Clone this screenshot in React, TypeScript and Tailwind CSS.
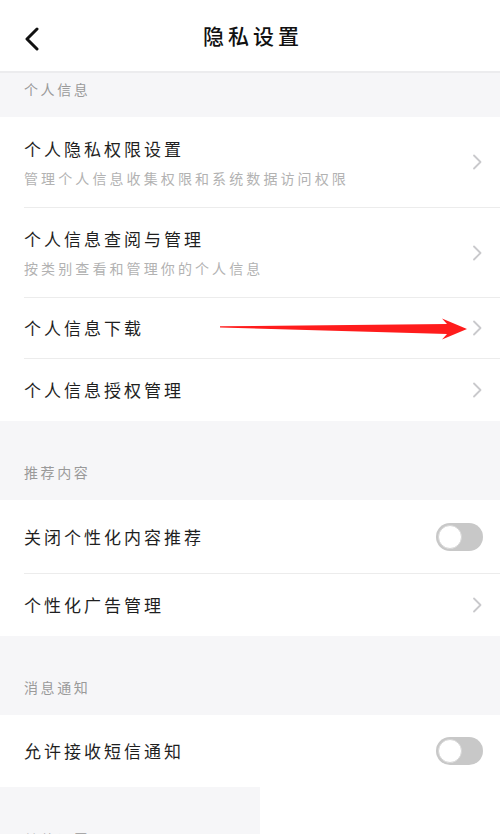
import React from "react";

const font = { fontFamily: '"Noto Sans CJK SC", "Noto Sans", sans-serif' };

function Chevron() {
  return (
    <svg width="12" height="18" viewBox="0 0 12 18" className="shrink-0">
      <path d="M3 2.5 L9.5 9 L3 15.5" fill="none" stroke="#c9c9cc" strokeWidth="1.8" strokeLinecap="round" strokeLinejoin="round" />
    </svg>
  );
}

function Toggle() {
  return (
    <div className="w-[47px] h-[28px] rounded-full bg-[#c8c8c8] p-[2px] flex items-center">
      <div className="w-[24px] h-[24px] rounded-full bg-white border border-[#d6d6d6]" />
    </div>
  );
}

function SectionLabel({ text, first }: { text: string; first?: boolean }) {
  return (
    <div className={`bg-[#f6f6f8] px-6 pb-[18px] ${first ? "pt-[6px]" : "pt-[41px]"}`}>
      <span className="block text-[14px] leading-[20px] tracking-[2.6px] text-[#9a9a9a]">{text}</span>
    </div>
  );
}

function Row({ title, sub, toggle, h, last }: { title: string; sub?: string; toggle?: boolean; h: string; last?: boolean }) {
  return (
    <div className={`flex items-center pl-6 ${h}`}>
      <div className={`flex-1 h-full flex items-center pr-[17px] ${last ? "" : "border-b border-[#ececec]"}`}>
        <div className="flex-1">
          <div className="text-[17px] leading-[24px] tracking-[3px] text-[#1f1f1f]">{title}</div>
          {sub && <div className="mt-[7px] text-[14px] leading-[20px] tracking-[3.1px] text-[#b2b2b2]">{sub}</div>}
        </div>
        {toggle ? <Toggle /> : <Chevron />}
      </div>
    </div>
  );
}

export default function App() {
  return (
    <div className="relative w-[500px] h-[834px] overflow-hidden bg-white" style={font}>
      <div className="h-[73px] relative flex items-center justify-center border-b-[2px] border-[#ececee]">
        <svg width="20" height="24" viewBox="0 0 20 24" className="absolute left-[22px] top-[27px]">
          <path d="M15 2 L5 12 L15 22" fill="none" stroke="#111" strokeWidth="3" strokeLinecap="round" strokeLinejoin="round" />
        </svg>
        <span className="pl-[6px] text-[21px] tracking-[4px] text-[#111] font-medium">隐私设置</span>
      </div>

      <SectionLabel text="个人信息" first />
      <div className="bg-white">
        <Row title="个人隐私权限设置" sub="管理个人信息收集权限和系统数据访问权限" h="h-[91px]" />
        <Row title="个人信息查阅与管理" sub="按类别查看和管理你的个人信息" h="h-[90px]" />
        <Row title="个人信息下载" h="h-[61px]" />
        <Row title="个人信息授权管理" h="h-[62px]" last />
      </div>

      <SectionLabel text="推荐内容" />
      <div className="bg-white">
        <Row title="关闭个性化内容推荐" toggle h="h-[74px]" />
        <Row title="个性化广告管理" h="h-[62px]" last />
      </div>

      <SectionLabel text="消息通知" />
      <div className="bg-white">
        <Row title="允许接收短信通知" toggle h="h-[72px]" last />
      </div>

      <div className="flex">
        <div className="w-[260px] bg-[#f6f6f8] px-6 pt-[42px]">
          <span className="block text-[14px] leading-[20px] tracking-[2.6px] text-[#9a9a9a]">其他设置</span>
        </div>
        <div className="flex-1 bg-white" />
      </div>

      <svg width="500" height="834" viewBox="0 0 500 834" className="absolute inset-0 pointer-events-none">
        <polygon points="220,326.3 447,324 442,318.5 467,329 442,339.5 447,334 220,327.6" fill="#ff1c1c" />
      </svg>
    </div>
  );
}
